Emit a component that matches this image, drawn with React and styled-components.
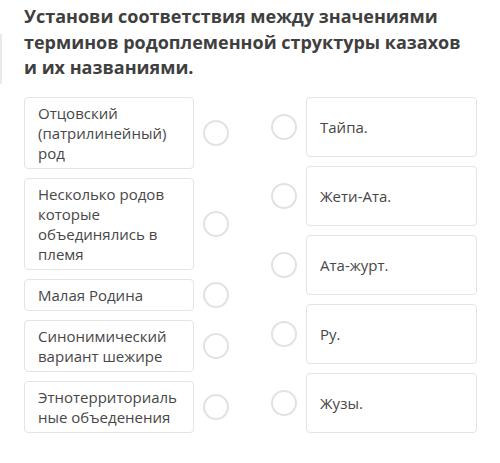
import styled, { createGlobalStyle } from "styled-components"

const GlobalStyle = createGlobalStyle`
    body {
        margin: 0;
        background: #ffffff;
        font-family: "Open Sans", "Liberation Sans", sans-serif;
    }
`

const terms = [
    "Отцовский (патрилинейный) род",
    "Несколько родов которые объединялись в племя",
    "Малая Родина",
    "Синонимический вариант шежире",
    "Этнотерриториальные объеденения",
]

const names = ["Тайпа.", "Жети-Ата.", "Ата-журт.", "Ру.", "Жузы."]

export default function App() {
    return (
        <Page>
            <GlobalStyle />
            <SideMark />
            <Title>
                Установи соответствия между значениями терминов родоплеменной структуры казахов и их названиями.
            </Title>
            <Board>
                <Column>
                    {terms.map((t) => (
                        <Row key={t}>
                            <TermCard>{t}</TermCard>
                            <Dot />
                        </Row>
                    ))}
                </Column>
                <Column>
                    {names.map((n) => (
                        <Row key={n}>
                            <Dot />
                            <NameCard>{n}</NameCard>
                        </Row>
                    ))}
                </Column>
            </Board>
        </Page>
    )
}

const Page = styled.div`
    position: relative;
    width: 500px;
    height: 463px;
    padding: 4px 0 0 24px;
    box-sizing: border-box;
    overflow: hidden;
`
const SideMark = styled.div`
    position: absolute;
    left: 0;
    top: 34px;
    width: 2px;
    height: 50px;
    background: #e6eceb;
`
const Title = styled.h1`
    margin: 0;
    width: 448px;
    font-size: 18px;
    line-height: 25.5px;
    font-weight: 700;
    color: #3f3f3f;
`
const Board = styled.div`
    display: grid;
    grid-template-columns: 205px 206px;
    column-gap: 42px;
    margin-top: 16px;
    align-items: start;
`
const Column = styled.div`
    display: flex;
    flex-direction: column;
    row-gap: 9px;
`
const Row = styled.div`
    display: flex;
    align-items: center;
    column-gap: 9px;
`
const Card = styled.div`
    box-sizing: border-box;
    border: 1px solid #e4e4e4;
    border-radius: 4px;
    background: #ffffff;
    font-size: 15px;
    line-height: 20px;
    color: #474747;
`
const TermCard = styled(Card)`
    width: 170px;
    padding: 5px 13px;
    overflow-wrap: anywhere;
`
const NameCard = styled(Card)`
    width: 171px;
    height: 60px;
    padding: 0 13px;
    display: flex;
    align-items: center;
`
const Dot = styled.div`
    flex: none;
    width: 26px;
    height: 26px;
    box-sizing: border-box;
    border: 2px solid #e2e2e2;
    border-radius: 50%;
`
